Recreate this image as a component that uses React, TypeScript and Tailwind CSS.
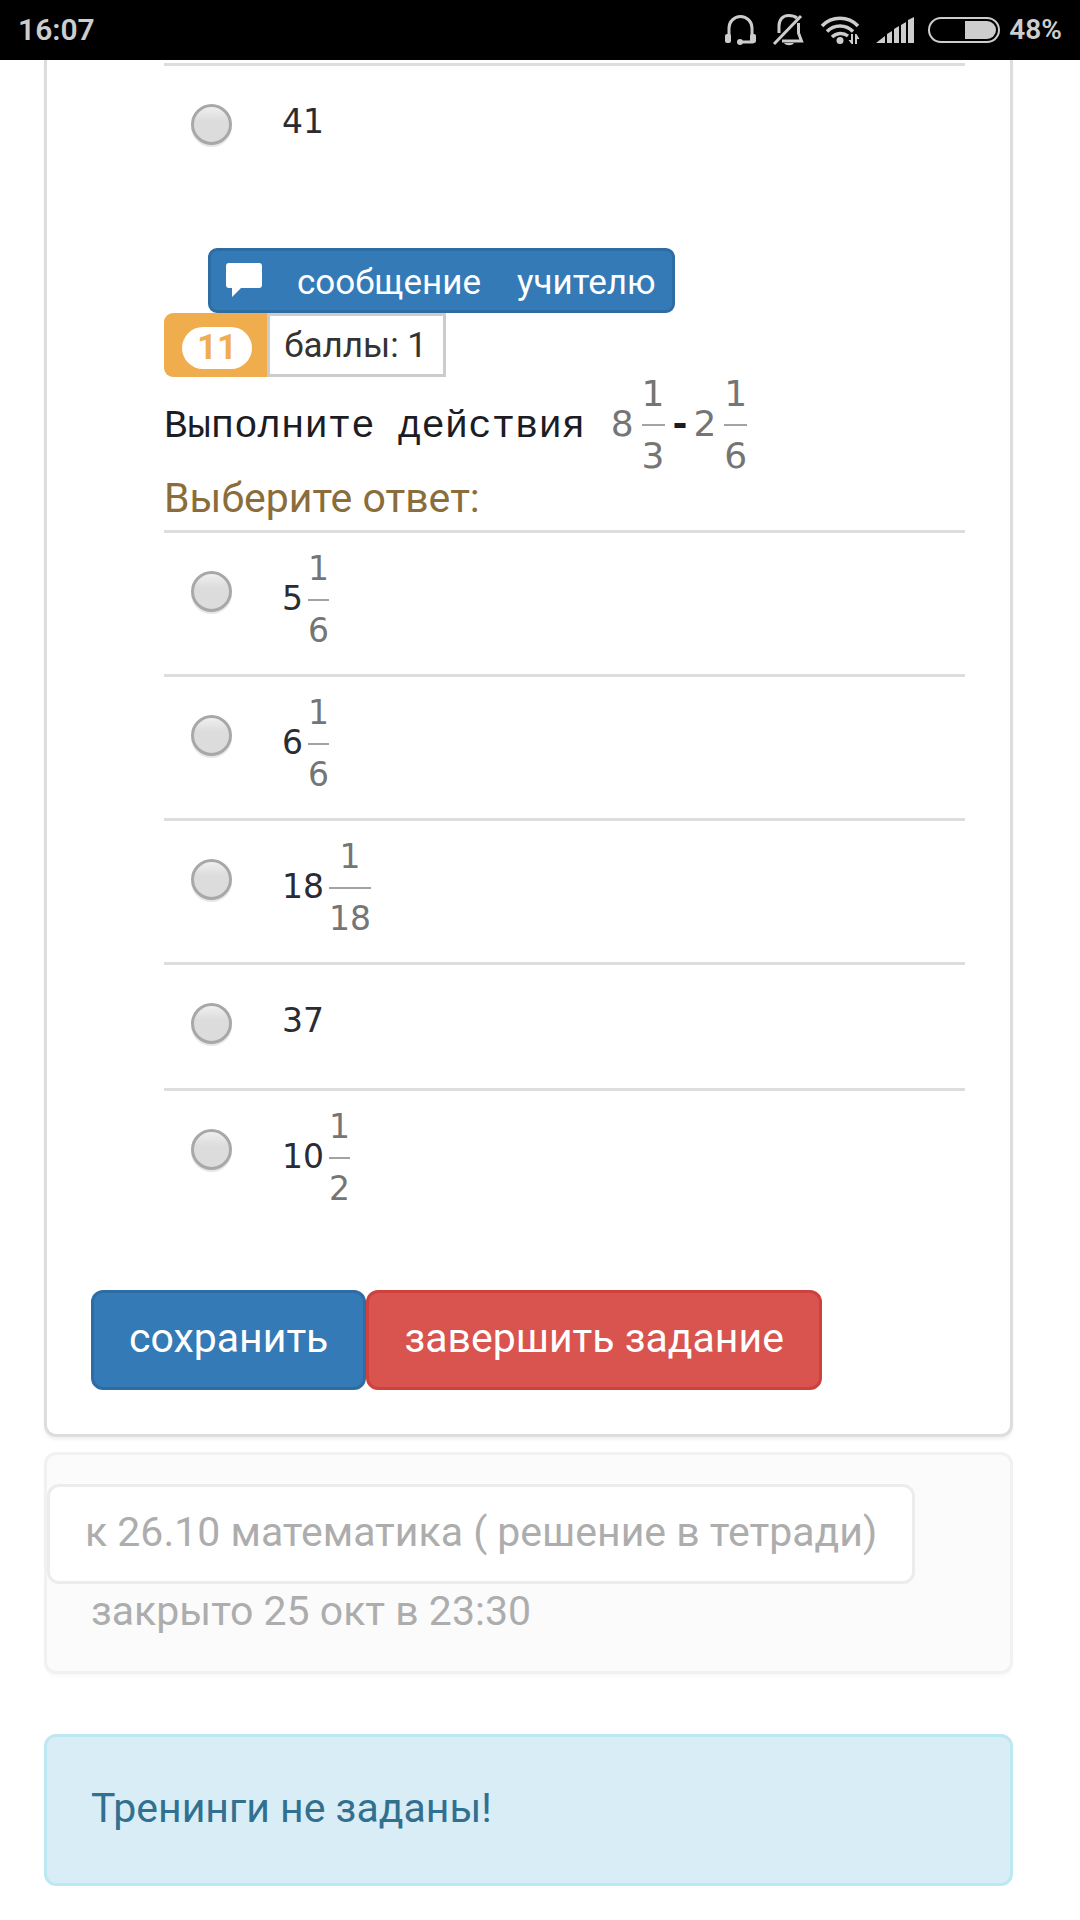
import type { ReactNode } from "react";

type Answer = { whole: string; num?: string; den?: string };

const answers: Answer[] = [
  { whole: "5", num: "1", den: "6" },
  { whole: "6", num: "1", den: "6" },
  { whole: "18", num: "1", den: "18" },
  { whole: "37" },
  { whole: "10", num: "1", den: "2" },
];

function StatusBar() {
  return (
    <header className="flex h-[60px] items-center justify-between bg-black px-[18px] text-[#cdcdcd]">
      <time className="text-[30px] leading-8 font-semibold">16:07</time>
      <div className="flex items-center">
        <svg className="mr-4 h-[30px] w-8" viewBox="0 0 32 30" fill="none" aria-label="Наушники">
          <path d="M5 22V13a11.500 11.500 0 0 1 23 0v14H16" stroke="currentColor" strokeWidth="3" />
          <rect x="1" y="19" width="6" height="9" rx="2" fill="currentColor" />
          <rect x="26" y="19" width="6" height="9" rx="2" fill="currentColor" />
          <circle cx="16" cy="27" r="3" fill="currentColor" />
        </svg>
        <svg className="mr-4 h-8 w-8" viewBox="0 0 32 32" fill="none" aria-label="Без звука">
          <path d="M25 4C22 1.500 19 1.500 16.500 1.500C10.500 1.500 7 6 7 12v7" stroke="currentColor" strokeWidth="3" />
          <path d="M26.500 9v10l3 8H10" stroke="currentColor" strokeWidth="3" />
          <path d="M2 30 29 2" stroke="currentColor" strokeWidth="3" />
          <path d="M12 29h10c-2 3-8 3-10 0Z" fill="currentColor" />
        </svg>
        <svg className="mr-4 h-[30px] w-10" viewBox="0 0 40 30" fill="none" aria-label="Wi-Fi">
          <path d="M2 11a25 25 0 0 1 36 0" stroke="currentColor" strokeWidth="3.500" />
          <path d="M7 16.500a18 18 0 0 1 26 0" stroke="currentColor" strokeWidth="3.500" />
          <path d="M12 22a12 12 0 0 1 16-1" stroke="currentColor" strokeWidth="3.500" />
          <circle cx="20" cy="25.500" r="3.500" fill="currentColor" />
          <path d="M33 19v10h-1.500l-3-4H31v-6ZM35 29V19h1.500l3 5H37v5Z" fill="currentColor" />
        </svg>
        <svg className="mr-[14px] h-[26px] w-[38px]" viewBox="0 0 38 26" fill="currentColor" aria-label="Сеть">
          <path d="M0 26 9 19v7ZM11 17l5-3v12h-5ZM18 12l5-3v17h-5ZM25 8l5-3v21h-5ZM32 3l6-3v26h-6Z" />
        </svg>
        <svg className="mr-[9px] h-[26px] w-[72px]" viewBox="0 0 72 26" fill="none" aria-label="Батарея">
          <rect x="1" y="1" width="70" height="24" rx="12" stroke="currentColor" strokeWidth="2" />
          <path d="M37 4h22a9 9 0 0 1 0 18H37Z" fill="currentColor" />
        </svg>
        <span className="text-[28px] leading-8 font-semibold">48%</span>
      </div>
    </header>
  );
}

function Fraction({ num, den }: { num: string; den: string }) {
  return (
    <span className="flex flex-col items-center text-[#757575]">
      <span>{num}</span>
      <span className="my-4 h-[2px] w-full bg-[#a3a3a3]" />
      <span>{den}</span>
    </span>
  );
}

function AnswerRow({ name, whole, num, den }: Answer & { name: string }) {
  return (
    <label className="flex min-h-[126px] items-start border-t-3 border-[#ddd] pl-[27px]">
      <input
        type="radio"
        name={name}
        className="mt-[38px] size-[41px] shrink-0 appearance-none rounded-full border-3 border-[#a8a8a8] bg-linear-to-b from-[#efefef] to-[#dcdcdc] to-40% shadow-[0_2px_1px_#e6e6e6] checked:bg-[#337ab7]"
      />
      {num && den ? (
        <span className="ml-[50px] flex h-[141px] items-start gap-[5px] pt-[22px] font-['DejaVu_Sans'] text-[33px] leading-[28px] text-[#2b2b33]">
          <span className="pt-[30px]">{whole}</span>
          <Fraction num={num} den={den} />
        </span>
      ) : (
        <span className="ml-[50px] pt-[42px] font-['DejaVu_Sans'] text-[33px] leading-[28px] text-[#2b2b33]">{whole}</span>
      )}
    </label>
  );
}

function ActionButton({ className, children }: { className: string; children: ReactNode }) {
  return (
    <button type="button" className={`rounded-xl border-3 px-[35px] pt-[21px] pb-[25px] text-[41px] leading-12 text-white ${className}`}>
      {children}
    </button>
  );
}

export default function App() {
  return (
    <div className="bg-white font-[Roboto,sans-serif] text-[#333]">
      <StatusBar />
      <main className="ml-11 mr-[67px]">
        <section className="rounded-b-xl border-3 border-t-0 border-[#ddd] pb-11 shadow-[0_3px_3px_rgba(0,0,0,0.05)]">
          <div className="pt-[3px] pl-[117px] pr-[45px]">
            <AnswerRow name="question-10" whole="41" />

            <button
              type="button"
              className="mt-[59px] ml-11 flex items-start rounded-[9px] border-3 border-[#2e6da4] bg-[#337ab7] pt-[12px] pr-4 pb-[7px] pl-[15px] text-[35px] leading-10 text-white"
            >
              <svg className="mr-[35px] h-[34px] w-9" viewBox="0 0 36 34" fill="currentColor" aria-hidden="true">
                <path d="M3 0h30q3 0 3 3v19q0 3-3 3H15l-9 9v-9H3q-3 0-3-3V3q0-3 3-3Z" />
              </svg>
              <span>сообщение</span>
              <span className="ml-9">учителю</span>
            </button>

            <div className="flex">
              <span className="rounded-l-[9px] bg-[#f0ad4e] pt-[14px] pr-[15px] pb-2 pl-[18px]">
                <span className="block rounded-full bg-white px-[15px] text-[35px] leading-[42px] font-bold text-[#f0ad4e]">11</span>
              </span>
              <span className="border-3 border-[#ccc] pt-[10px] pr-4 pb-2 pl-[14px] text-[35px] leading-10">баллы: 1</span>
            </div>

            <h2 className="flex pt-[3px] text-[39px] leading-[28px] text-[#1c1c24]">
              <span className="pt-[33px] font-['Liberation_Mono',monospace] whitespace-pre">Выполните действия </span>
              <span className="ml-[2px] flex items-start font-['DejaVu_Sans'] text-[36px] text-[#757575]">
                <span className="pt-[30px]">8</span>
                <span className="ml-[8px]">
                  <Fraction num="1" den="3" />
                </span>
                <span className="ml-[8px] pt-[30px] font-bold text-[#1c1c24]">-</span>
                <span className="ml-[6px] pt-[30px]">2</span>
                <span className="ml-[8px]">
                  <Fraction num="1" den="6" />
                </span>
              </span>
            </h2>

            <fieldset>
              <legend className="pt-1 pb-2 text-[41px] leading-12 text-[#8a6d3b]">Выберите ответ:</legend>
              {answers.map((answer, i) => (
                <AnswerRow key={i} name="question-11" {...answer} />
              ))}
            </fieldset>
          </div>

          <div className="mt-[58px] flex pl-11">
            <ActionButton className="border-[#2e6da4] bg-[#337ab7]">сохранить</ActionButton>
            <ActionButton className="border-[#ce423e] bg-[#d9534f]">завершить задание</ActionButton>
          </div>
        </section>

        <section className="mt-[15px] rounded-xl border-3 border-[#f1f1f1] bg-[#fbfbfb] pt-[29px] pb-[33px] text-[41px] leading-12 text-[#adadad] shadow-[0_3px_3px_rgba(0,0,0,0.02)]">
          <button type="button" disabled className="rounded-xl border-3 border-[#ececec] bg-white px-[35px] pt-[21px] pb-[25px]">
            к 26.10 математика ( решение в тетради)
          </button>
          <p className="py-[3px] pl-11">закрыто 25 окт в 23:30</p>
        </section>

        <section className="mt-[60px] rounded-xl border-3 border-[#bce8f1] bg-[#d9edf7] px-11 pt-[47px] pb-[51px] text-[41px] leading-12 text-[#31708f]">
          Тренинги не заданы!
        </section>
      </main>
    </div>
  );
}
